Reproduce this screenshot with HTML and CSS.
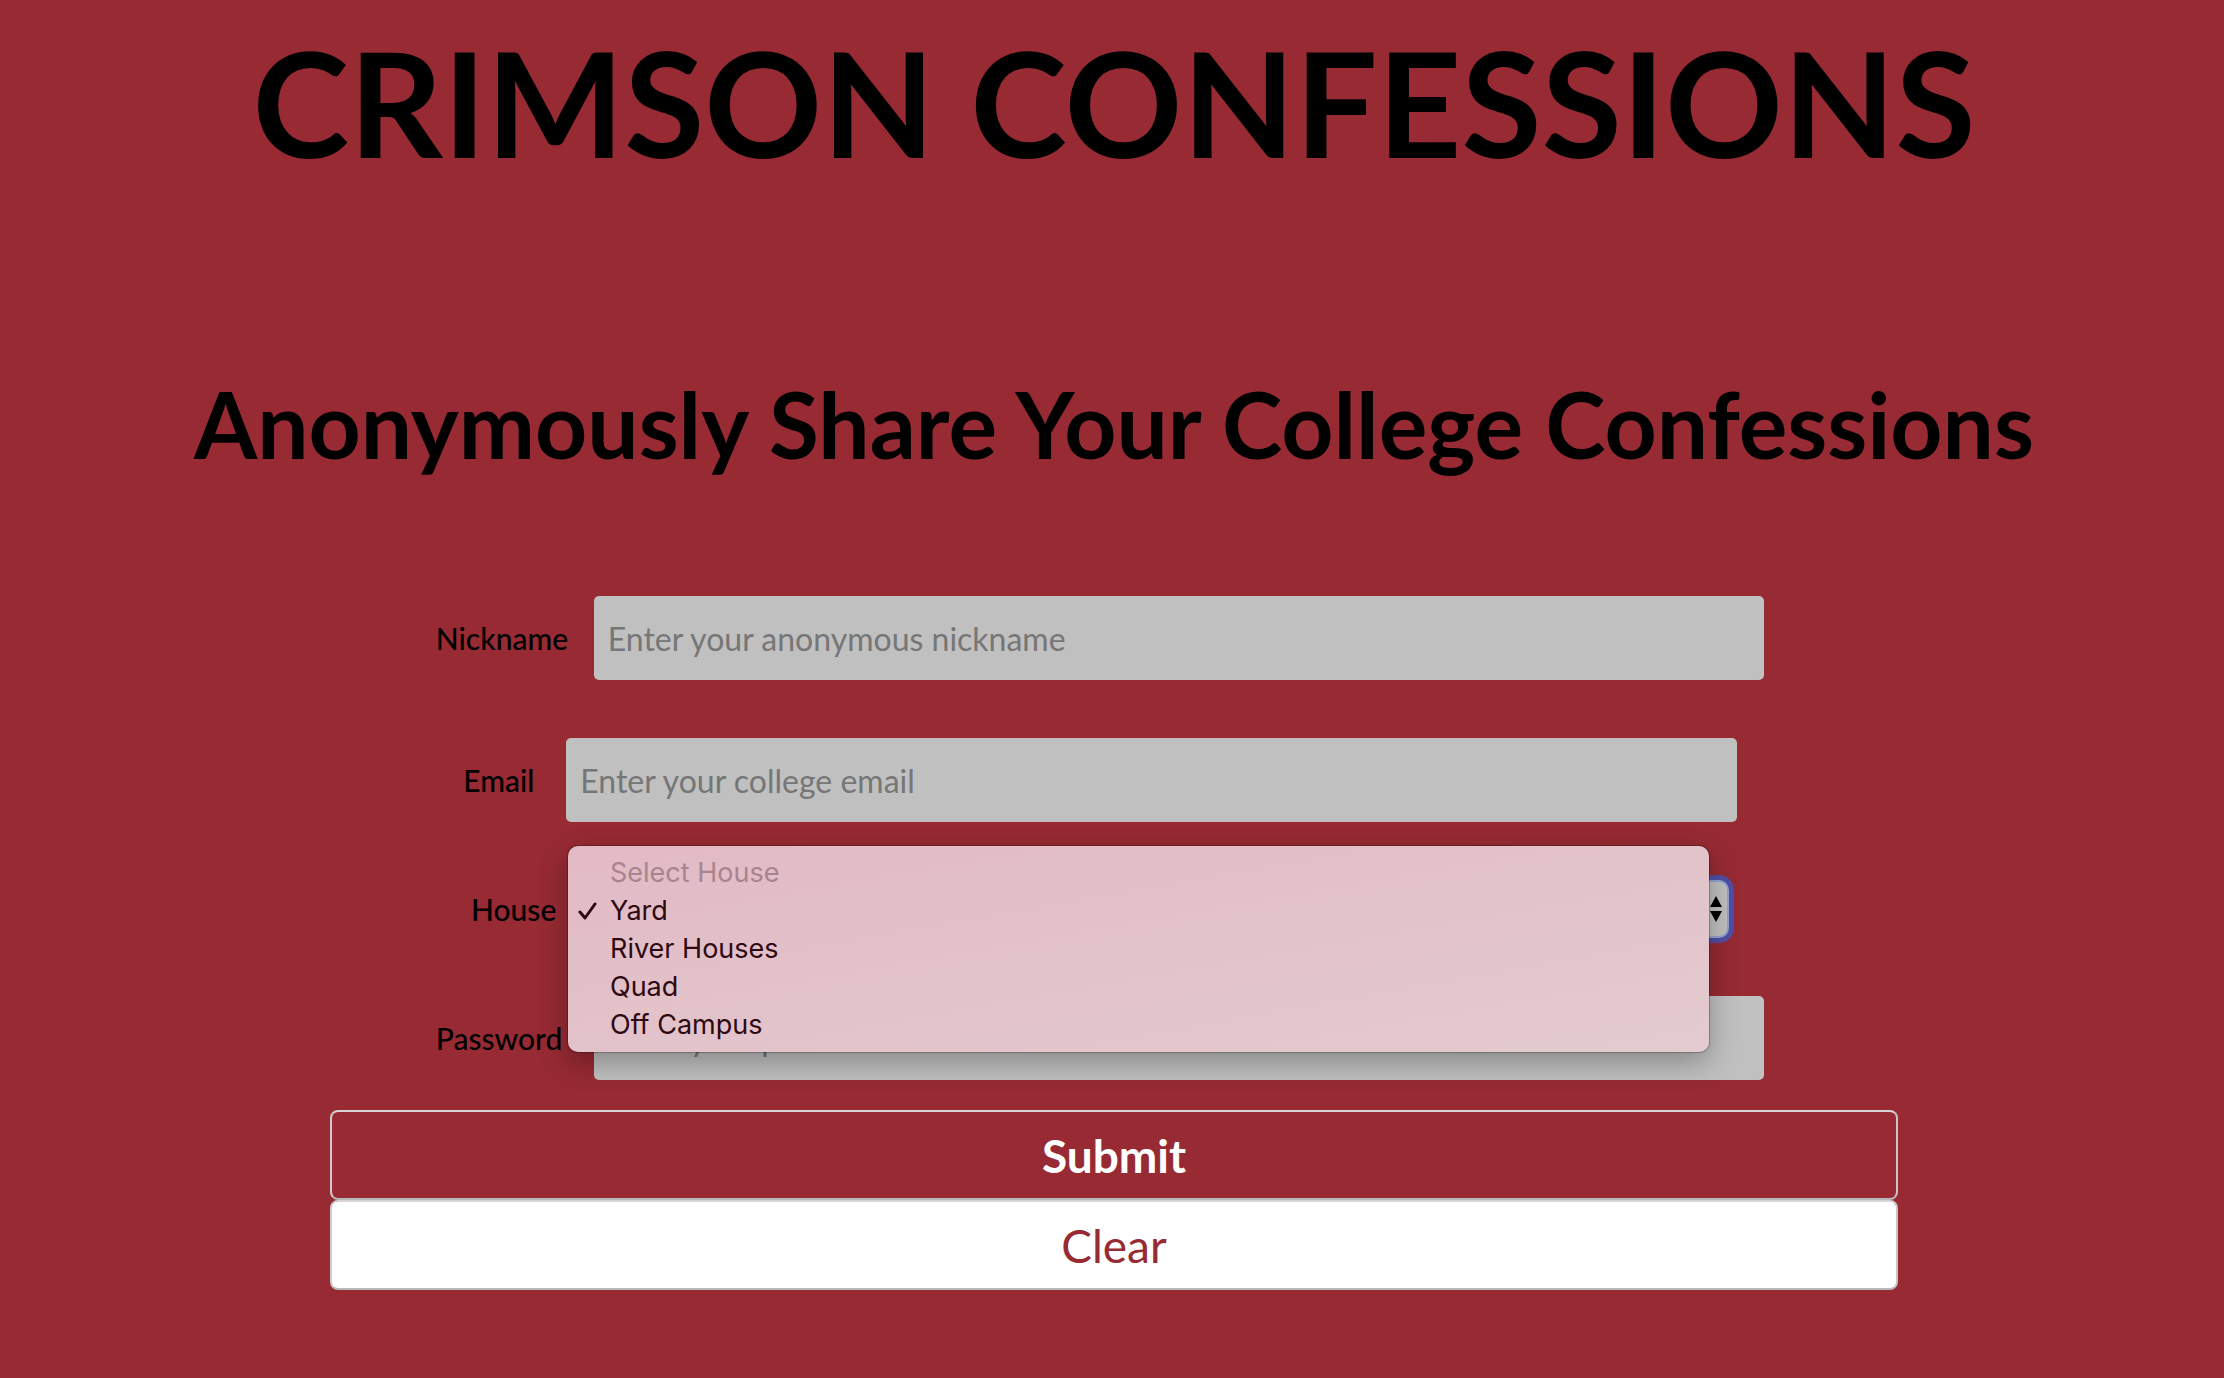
FILE: index.html
```html
<!DOCTYPE html>
<html lang="en">
<head>
<meta charset="utf-8">
<title>Crimson Confessions</title>
<link rel="stylesheet" href="styles.css">
</head>
<body>
<header class="masthead">
  <h1 class="title">CRIMSON CONFESSIONS</h1>
  <h2 class="tagline">Anonymously Share Your College Confessions</h2>
</header>
<form class="signup">
  <div class="row">
    <label class="label label-long" for="nickname">Nickname</label>
    <input class="field" id="nickname" type="text" placeholder="Enter your anonymous nickname">
  </div>
  <div class="row">
    <label class="label label-short" for="email">Email</label>
    <input class="field" id="email" type="email" placeholder="Enter your college email">
  </div>
  <div class="row">
    <label class="label label-short" for="house">House</label>
    <div class="picker">
      <select class="select" id="house">
        <option disabled>Select House</option>
        <option selected>Yard</option>
        <option>River Houses</option>
        <option>Quad</option>
        <option>Off Campus</option>
      </select>
      <svg class="arrows" viewBox="0 0 12 26" aria-hidden="true"><path d="M6 0l6 11H0zM0 15h12L6 26z"/></svg>
      <ul class="menu" role="listbox" aria-label="House">
        <li class="option option-off" role="option" aria-disabled="true">Select House</li>
        <li class="option" role="option" aria-selected="true"><svg class="check" viewBox="0 0 20 18" aria-hidden="true"><path d="M2 10l5 6L17 2"/></svg>Yard</li>
        <li class="option" role="option">River Houses</li>
        <li class="option" role="option">Quad</li>
        <li class="option" role="option">Off Campus</li>
      </ul>
    </div>
  </div>
  <div class="row">
    <label class="label label-long" for="password">Password</label>
    <input class="field" id="password" type="password" placeholder="Enter your password">
  </div>
  <div class="actions">
    <button class="button button-submit" type="submit">Submit</button>
    <button class="button button-clear" type="reset">Clear</button>
  </div>
</form>
</body>
</html>
```
FILE: styles.css
```css
* { box-sizing: border-box; }

body {
  margin: 0;
  padding-left: 4px;
  background: #972a33;
  color: #000;
  font-family: Lato, "Open Sans", sans-serif;
}

.masthead { text-align: center; white-space: nowrap; }

.title {
  margin: 0;
  padding-top: 12px;
  font-size: 146px;
  line-height: 180px;
  font-weight: 700;
}

.tagline {
  margin: 0;
  padding: 164px 0 104px;
  font-size: 91px;
  line-height: 136px;
  font-weight: 700;
}

.signup {
  width: calc(70% + 14px);
  margin: 0 auto;
  display: flex;
  flex-direction: column;
  gap: 58px;
}

.row {
  display: flex;
  justify-content: center;
  align-items: center;
  padding-right: 28px;
}

.label {
  flex: none;
  margin-right: 28px;
  font-size: 30px;
  line-height: 36px;
  font-weight: 500;
}

.label-long { width: 130px; }
.label-short { width: 75px; }

.field {
  flex: none;
  width: 76%;
  height: 84px;
  padding: 0 14px;
  border: 0;
  border-radius: 5px;
  background: #c0c0c0;
  color: #000;
  font: inherit;
  font-size: 32px;
}

.field::placeholder { color: #767676; opacity: 1; }

.picker {
  position: relative;
  flex: none;
  width: 75%;
}

.select {
  display: block;
  width: 100%;
  height: 58px;
  padding: 0 14px;
  appearance: none;
  border: 2px solid #92a5cd;
  border-radius: 10px;
  background: #c0c0c0;
  color: #000;
  font: inherit;
  font-size: 32px;
  box-shadow: 0 0 1px 5px #504fa5;
}

.arrows {
  position: absolute;
  top: 16px;
  right: 7px;
  width: 12px;
  height: 26px;
}

.menu {
  position: absolute;
  top: -34px;
  left: -6px;
  right: 20px;
  margin: 0;
  padding: 8px 0;
  list-style: none;
  border-radius: 10px;
  background: linear-gradient(170deg, #e2bac5, #e3cbcf);
  box-shadow: 0 0 1px 1px rgba(0, 0, 0, .25), 0 10px 30px rgba(0, 0, 0, .3);
  color: #2f0910;
  font-family: Inter, "Liberation Sans", sans-serif;
  font-size: 27px;
  line-height: 38px;
}

.option { position: relative; padding-left: 42px; }
.option-off { color: #a9848d; }

.check {
  position: absolute;
  top: 10px;
  left: 10px;
  width: 20px;
  height: 18px;
  fill: none;
  stroke: currentColor;
  stroke-width: 3;
  stroke-linecap: round;
  stroke-linejoin: round;
}

.actions {
  display: flex;
  flex-direction: column;
  margin-top: -28px;
}

.button {
  height: 90px;
  border: 2px solid;
  border-color: #d8d3d4 #c8c5c6 #b8b8b8 #d0cccd;
  border-radius: 8px;
  font: inherit;
  font-size: 46px;
}

.button-submit { background: #972a33; color: #fff; font-weight: 700; }
.button-clear { background: #fff; color: #972a33; }
```
